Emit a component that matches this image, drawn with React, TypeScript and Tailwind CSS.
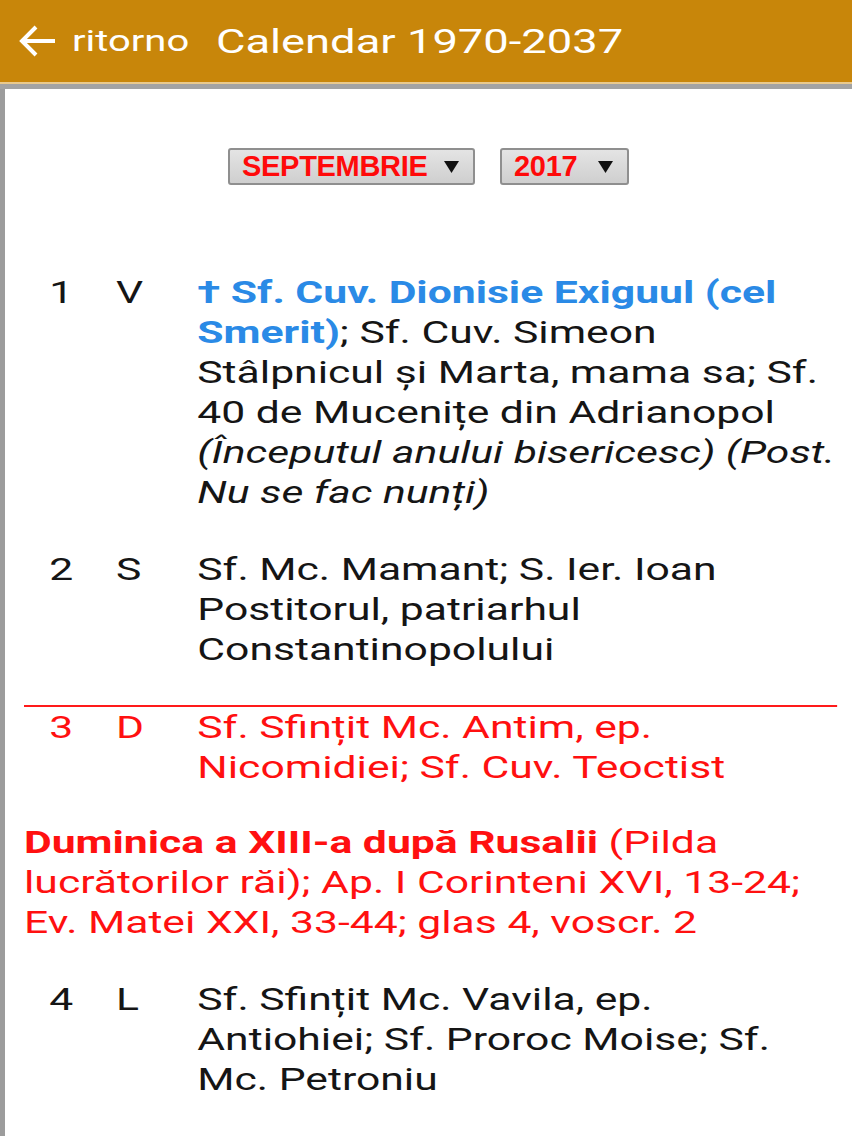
import React from "react";

const Row = ({
  n,
  d,
  children,
  red,
  border,
}: {
  n: string;
  d: string;
  children: React.ReactNode;
  red?: boolean;
  border?: boolean;
}) => (
  <div
    className={
      "flex items-start " +
      (red ? "text-[#ff1010] " : "text-[#151515] ") +
      (border ? "border-t-2 border-[#ff1a1a]" : "")
    }
  >
    <div className="w-[37px] shrink-0 text-right">{n}</div>
    <div className="w-[32px] shrink-0" />
    <div className="w-[61px] shrink-0">{d}</div>
    <div className="flex-1">{children}</div>
  </div>
);

const Select = ({ label, w }: { label: string; w: string }) => (
  <div
    className={
      "h-[37px] flex items-center justify-between pl-[12px] pr-[14px] rounded-[3px] border-2 border-[#8f8f8f] bg-gradient-to-b from-[#e4e4e4] to-[#cfcfcf] " +
      w
    }
  >
    <span className="font-['Liberation_Sans',Arial,sans-serif] font-bold text-[29px] leading-none text-[#ff0a0a] tracking-[-0.3px]">
      {label}
    </span>
    <svg width="15" height="12" viewBox="0 0 15 12">
      <polygon points="0,0 15,0 7.5,12" fill="#111" />
    </svg>
  </div>
);

export default function App() {
  return (
    <div className="w-[852px] h-[1136px] overflow-hidden bg-white font-['Roboto',sans-serif] flex flex-col">
      <header className="h-[82px] shrink-0 bg-[#c8860a] flex items-center text-white">
        <svg width="40" height="40" viewBox="0 0 40 40" className="ml-[18px] shrink-0">
          <path
            d="M37 20 H5 M18 6 L4 20 L18 34"
            stroke="#fff"
            strokeWidth="4"
            fill="none"
            strokeLinecap="butt"
            strokeLinejoin="miter"
          />
        </svg>
        <div className="ml-[14px] flex items-center whitespace-nowrap origin-left scale-x-[1.333]">
          <span className="text-[30px] leading-none">ritorno</span>
          <span className="ml-[20px] text-[34px] leading-none">Calendar 1970-2037</span>
        </div>
      </header>
      <div className="h-[2px] shrink-0 bg-[#e9c98d]" />
      <div className="h-[5px] shrink-0 bg-[#a3a3a3]" />
      <div className="flex-1 flex border-l-[5px] border-[#9c9c9c]">
        <div className="flex-1 pl-[19px] pr-[14px]">
          <div className="flex justify-center gap-[25px] mt-[59px] pr-[5px]">
            <Select label="SEPTEMBRIE" w="w-[247px]" />
            <Select label="2017" w="w-[129px]" />
          </div>
          <div className="mt-[87px] w-[610px] origin-left scale-x-[1.333] text-[32px] leading-[40px] flex flex-col gap-[37px]">
            <Row n="1" d="V">
              <span className="text-[#2a8ae6] font-bold">
                † Sf. Cuv. Dionisie Exiguul (cel Smerit)
              </span>
              ; Sf. Cuv. Simeon Stâlpnicul și Marta, mama sa; Sf. 40 de Mucenițe din
              Adrianopol <i>(Începutul anului bisericesc) (Post. Nu se fac nunți)</i>
            </Row>
            <Row n="2" d="S">
              Sf. Mc. Mamant; S. Ier. Ioan Postitorul, patriarhul Constantinopolului
            </Row>
            <div className="flex flex-col gap-[35px] -mt-[1px]">
              <Row n="3" d="D" red border>
                Sf. Sfințit Mc. Antim, ep. Nicomidiei; Sf. Cuv. Teoctist
              </Row>
              <div className="text-[#ff1010]">
                <b>Duminica a XIII-a după Rusalii</b> (Pilda lucrătorilor răi); Ap. I
                Corinteni XVI, 13-24; Ev. Matei XXI, 33-44; glas 4, voscr. 2
              </div>
            </div>
            <Row n="4" d="L">
              Sf. Sfințit Mc. Vavila, ep. Antiohiei; Sf. Proroc Moise; Sf. Mc. Petroniu
            </Row>
          </div>
        </div>
      </div>
    </div>
  );
}
